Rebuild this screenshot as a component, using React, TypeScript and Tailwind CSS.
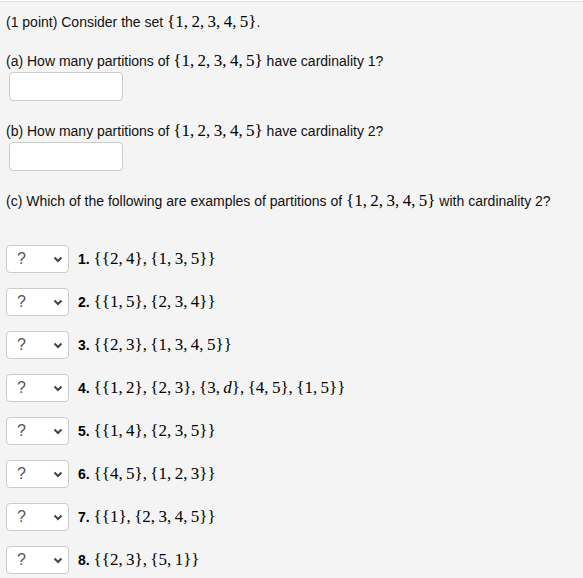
import React from 'react';

const textFont = { fontFamily: '"Liberation Sans", Arial, sans-serif' };

// math spans: commas followed by thin spaces, like the typeset sets
function M({ children }: { children: React.ReactNode }) {
  return (
    <span className="font-['Liberation_Serif',serif] text-[17px] leading-none text-black">{children}</span>
  );
}

const t = (s: string) => s.replace(/, /g, ',\u2009');

const SET = t('{1, 2, 3, 4, 5}');

const options: React.ReactNode[] = [
  t('{{2, 4}, {1, 3, 5}}'),
  t('{{1, 5}, {2, 3, 4}}'),
  t('{{2, 3}, {1, 3, 4, 5}}'),
  <>
    {t('{{1, 2}, {2, 3}, {3, ')}
    <i>d</i>
    {t('}, {4, 5}, {1, 5}}')}
  </>,
  t('{{1, 4}, {2, 3, 5}}'),
  t('{{4, 5}, {1, 2, 3}}'),
  t('{{1}, {2, 3, 4, 5}}'),
  t('{{2, 3}, {5, 1}}'),
];

function AnswerBox() {
  return <div className="mt-px ml-[9px] h-[29px] w-[114px] rounded-[4px] border border-[#cccccc] bg-white" />;
}

function QuestionSelect() {
  return (
    <div className="flex h-[28px] w-[63px] items-center justify-between rounded-[4px] border border-[#cccccc] bg-white pl-[10px] pr-[5px]">
      <span className="text-[16px] text-[#555555]">?</span>
      <svg width="10" height="7" viewBox="0 0 10 7">
        <polyline points="1.5,1.5 5,5 8.5,1.5" fill="none" stroke="#444" strokeWidth="2" />
      </svg>
    </div>
  );
}

export default function App() {
  return (
    <div className="min-h-screen bg-white pt-px" style={textFont}>
      <div className="min-h-[577px] border-t border-[#e2e2e2] bg-[#f4f4f4] text-[14px] text-[#111111]">
        <p className="pl-[6px] pt-[10px] leading-[20px]">
          (1 point) Consider the set <M>{SET}</M>.
        </p>

        <p className="mt-[19px] pl-[6px] leading-[20px]">
          (a) How many partitions of <M>{SET}</M> have cardinality 1?
        </p>
        <AnswerBox />

        <p className="mt-[20px] pl-[6px] leading-[20px]">
          (b) How many partitions of <M>{SET}</M> have cardinality 2?
        </p>
        <AnswerBox />

        <p className="mt-[20px] pl-[6px] leading-[20px]">
          (c) Which of the following are examples of partitions of <M>{SET}</M> with cardinality 2?
        </p>

        <ul className="mt-[34px] flex flex-col gap-[15px] pl-[6px]">
          {options.map((opt, i) => (
            <li key={i} className="flex h-[28px] items-center gap-[9px]">
              <QuestionSelect />
              <span className="leading-[20px]">
                <b className="font-bold text-black">{i + 1}.</b> <M>{opt}</M>
              </span>
            </li>
          ))}
        </ul>
      </div>
    </div>
  );
}
